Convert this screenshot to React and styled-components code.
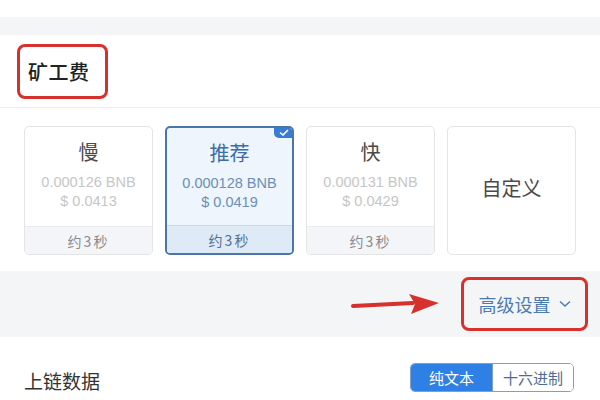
import React, { useState } from 'react';
import styled, { createGlobalStyle } from 'styled-components';

const GlobalStyle = createGlobalStyle`
  html, body {
    margin: 0;
    padding: 0;
    background: #fff;
  }
  body {
    font-family: "Noto Sans CJK SC", "Noto Sans", "Liberation Sans", sans-serif;
  }
`;

const Page = styled.div`
  width: 600px;
  height: 400px;
  overflow: hidden;
  background: #fff;
`;

const Spacer = styled.div`
  height: ${(p) => p.h}px;
  background: ${(p) => p.bg || '#fff'};
`;

const Header = styled.div`
  height: 72px;
  display: flex;
  align-items: center;
  padding-left: 17px;
  border-bottom: 1px solid #ededed;
`;

const RedBox = styled.div`
  box-sizing: border-box;
  width: ${(p) => p.w}px;
  height: ${(p) => p.h}px;
  border: 3px solid #d7312e;
  border-radius: 8px;
  display: flex;
  align-items: center;
  justify-content: ${(p) => p.justify || 'flex-start'};
  padding: 0 0 0 ${(p) => p.pl || 0}px;
`;

const Title = styled.span`
  font-size: 20px;
  font-weight: 500;
  color: #222;
  letter-spacing: 0.5px;
`;

const CardRow = styled.div`
  display: grid;
  grid-template-columns: repeat(4, 129px);
  column-gap: 12px;
  padding: 18px 0 16px 24px;
`;

const Card = styled.div`
  position: relative;
  box-sizing: border-box;
  height: 129px;
  border: ${(p) => (p.active ? '2px solid #4a77a8' : '1px solid #e4e4e4')};
  border-radius: 5px;
  background: ${(p) => (p.active ? '#eef5fc' : '#fff')};
  display: flex;
  flex-direction: column;
  overflow: hidden;
`;

const CardBody = styled.div`
  flex: 1;
  display: flex;
  flex-direction: column;
  align-items: center;
  justify-content: ${(p) => (p.center ? 'center' : 'flex-start')};
  padding-top: ${(p) => (p.center ? 0 : 10)}px;
`;

const Speed = styled.div`
  font-size: 20px;
  line-height: 30px;
  color: ${(p) => (p.active ? '#3b6ca5' : '#4a4a4a')};
  margin-bottom: 6px;
`;

const Amount = styled.div`
  font-family: "Liberation Sans", "Noto Sans", sans-serif;
  font-size: 14.5px;
  line-height: 19px;
  color: ${(p) => (p.active ? '#6b8fb7' : '#c6c6c6')};
`;

const Footer = styled.div`
  height: 27px;
  display: flex;
  align-items: center;
  justify-content: center;
  border-top: 1px solid ${(p) => (p.active ? '#c9d8ea' : '#e9ebee')};
  background: ${(p) => (p.active ? '#dfeaf7' : '#f3f5f8')};
  font-size: 14px;
  color: ${(p) => (p.active ? '#556f8e' : '#8a8a8a')};
  letter-spacing: 2px;
`;

const Badge = styled.div`
  position: absolute;
  top: -1px;
  right: -1px;
  width: 19px;
  height: 11px;
  background: #3a7bd5;
  border-bottom-left-radius: 5px;
  display: flex;
  align-items: center;
  justify-content: center;
`;

const Band = styled.div`
  height: 66px;
  background: #f4f5f7;
  display: flex;
  align-items: center;
  justify-content: flex-end;
  padding-right: 12px;
  gap: 20px;
`;

const Link = styled.span`
  font-size: 18px;
  color: #4b7bb0;
  display: flex;
  align-items: center;
  gap: 8px;
`;

const Bottom = styled.div`
  height: 47px;
  display: flex;
  align-items: center;
  justify-content: space-between;
  padding: 17px 26px 0 24px;
`;

const Label = styled.span`
  font-size: 19px;
  color: #333;
  margin-top: 5px;
`;

const Segment = styled.div`
  display: flex;
  height: 29px;
  border: 1px solid #7f9fc6;
  border-radius: 5px;
  overflow: hidden;
  box-sizing: border-box;
`;

const SegButton = styled.button`
  width: 81px;
  border: none;
  padding: 0;
  font-family: inherit;
  font-size: 15px;
  background: ${(p) => (p.active ? '#2f80e4' : '#fff')};
  color: ${(p) => (p.active ? '#fff' : '#4b6d94')};
  border-left: ${(p) => (p.first ? 'none' : '1px solid #7f9fc6')};
`;

const fees = [
  { name: '慢', bnb: '0.000126 BNB', usd: '$ 0.0413' },
  { name: '推荐', bnb: '0.000128 BNB', usd: '$ 0.0419' },
  { name: '快', bnb: '0.000131 BNB', usd: '$ 0.0429' },
];

const App = () => {
  const [selected, setSelected] = useState(1);
  const [mode, setMode] = useState('text');

  return (
    <Page>
      <GlobalStyle />
      <Spacer h={17} />
      <Spacer h={18} bg="#f4f5f7" />
      <Header>
        <RedBox w={91} h={55} pl={8}>
          <Title>矿工费</Title>
        </RedBox>
      </Header>
      <CardRow>
        {fees.map((f, i) => {
          const active = selected === i;
          return (
            <Card key={f.name} active={active} onClick={() => setSelected(i)}>
              {active && (
                <Badge>
                  <svg width="10" height="7" viewBox="0 0 10 7">
                    <path d="M1 3.5 L4 6 L9 1" stroke="#fff" strokeWidth="1.6" fill="none" />
                  </svg>
                </Badge>
              )}
              <CardBody>
                <Speed active={active}>{f.name}</Speed>
                <Amount active={active}>{f.bnb}</Amount>
                <Amount active={active}>{f.usd}</Amount>
              </CardBody>
              <Footer active={active}>约3秒</Footer>
            </Card>
          );
        })}
        <Card>
          <CardBody center>
            <Speed>自定义</Speed>
          </CardBody>
        </Card>
      </CardRow>
      <Band>
        <svg width="90" height="24" viewBox="0 0 90 24">
          <path d="M2 14 L62 11" stroke="#d7312e" strokeWidth="4" strokeLinecap="round" />
          <path d="M58 2 L88 11 L60 22 L64 12 Z" fill="#d7312e" />
        </svg>
        <RedBox w={127} h={54} justify="center">
          <Link>
            高级设置
            <svg width="12" height="8" viewBox="0 0 12 8">
              <path d="M1 1.5 L6 6 L11 1.5" stroke="#4b7bb0" strokeWidth="1.4" fill="none" />
            </svg>
          </Link>
        </RedBox>
      </Band>
      <Bottom>
        <Label>上链数据</Label>
        <Segment>
          <SegButton first active={mode === 'text'} onClick={() => setMode('text')}>
            纯文本
          </SegButton>
          <SegButton active={mode === 'hex'} onClick={() => setMode('hex')}>
            十六进制
          </SegButton>
        </Segment>
      </Bottom>
    </Page>
  );
};

export default App;
